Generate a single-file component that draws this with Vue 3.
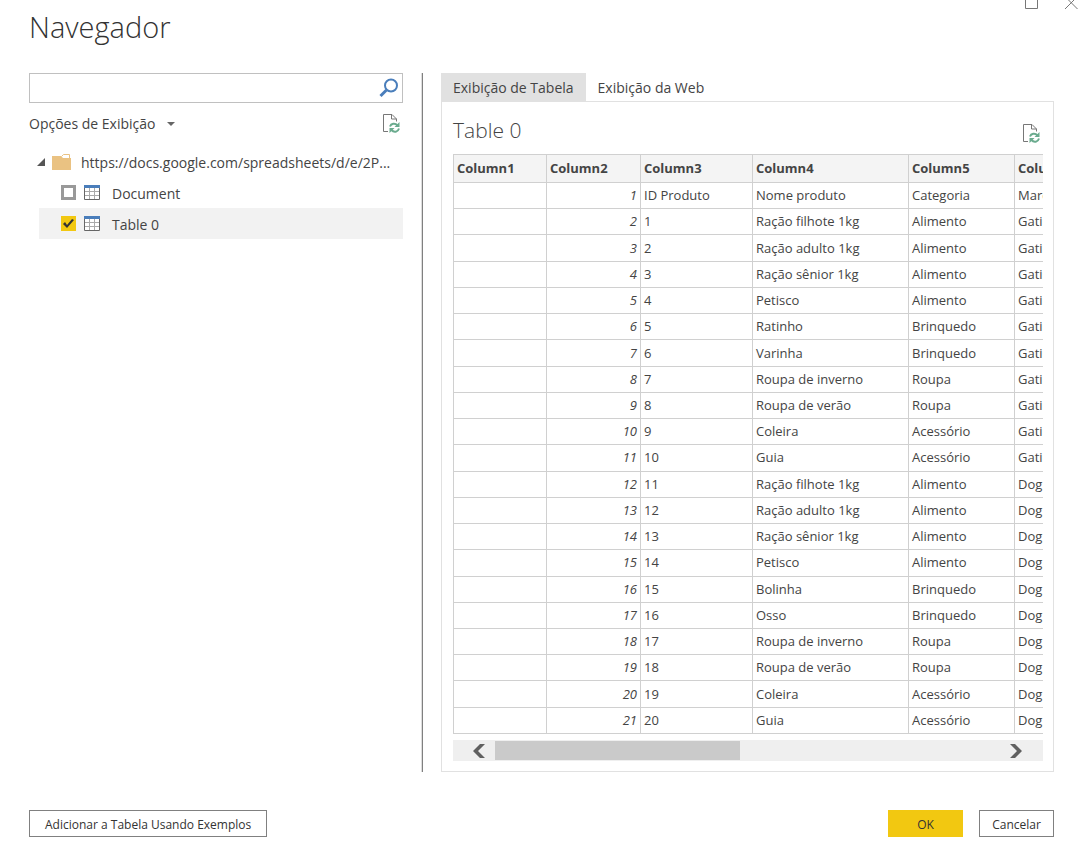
<script setup>
import { ref } from 'vue'

const search = ref('')
const items = ref([
  { name: 'Document', checked: false },
  { name: 'Table 0', checked: true },
])

const columns = ['Column1', 'Column2', 'Column3', 'Column4', 'Column5', 'Column6']
const products = [
  ['Ração filhote 1kg', 'Alimento'],
  ['Ração adulto 1kg', 'Alimento'],
  ['Ração sênior 1kg', 'Alimento'],
  ['Petisco', 'Alimento'],
  ['Ratinho', 'Brinquedo'],
  ['Varinha', 'Brinquedo'],
  ['Roupa de inverno', 'Roupa'],
  ['Roupa de verão', 'Roupa'],
  ['Coleira', 'Acessório'],
  ['Guia', 'Acessório'],
  ['Ração filhote 1kg', 'Alimento'],
  ['Ração adulto 1kg', 'Alimento'],
  ['Ração sênior 1kg', 'Alimento'],
  ['Petisco', 'Alimento'],
  ['Bolinha', 'Brinquedo'],
  ['Osso', 'Brinquedo'],
  ['Roupa de inverno', 'Roupa'],
  ['Roupa de verão', 'Roupa'],
  ['Coleira', 'Acessório'],
  ['Guia', 'Acessório'],
]
const rows = [
  ['', 1, 'ID Produto', 'Nome produto', 'Categoria', 'Marca'],
  ...products.map(([name, category], i) => [
    '', i + 2, i + 1, name, category, i < 10 ? 'Gatinho' : 'Dog',
  ]),
]
</script>

<template>
  <div class="dialog">
    <div class="window-controls">
      <button type="button" aria-label="Maximizar">
        <svg width="13" height="10" viewBox="0 0 13 10"><path d="M.5-3V8.500H12.500V-3" /></svg>
      </button>
      <button type="button" aria-label="Fechar">
        <svg width="13" height="10" viewBox="0 0 13 10"><path d="M0 9L12.500-3.500M0-3.500L12.500 9" /></svg>
      </button>
    </div>

    <h1>Navegador</h1>

    <main>
      <section class="sources">
        <div class="search">
          <input v-model="search" type="text" aria-label="Pesquisar" />
          <button type="button" aria-label="Pesquisar">
            <svg width="20" height="20" viewBox="0 0 20 20">
              <circle cx="12" cy="7.500" r="6" />
              <path d="M7.500 12L1.500 18" class="handle" />
            </svg>
          </button>
        </div>

        <div class="options">
          <button type="button" class="menu">
            Opções de Exibição
            <svg width="8" height="4" viewBox="0 0 8 4"><path d="M0 0H8L4 4Z" /></svg>
          </button>
          <button type="button" class="refresh" aria-label="Atualizar">
            <svg width="19" height="20" viewBox="0 0 19 20">
              <path class="page" d="M6 18.500H1.500V1.500H10L14.500 6V8.500M9.500 1.500V6H14.500" />
              <path class="arrows" d="M8 13.500C9 10.500 13 9.500 15.500 12.500M17 15.500C16 19 12 20 9.500 17" />
              <path class="heads" d="M17.500 9V14H12.500ZM7.500 20V15H12.500Z" />
            </svg>
          </button>
        </div>

        <div class="tree">
          <div class="root">
            <svg class="expander" width="8" height="8" viewBox="0 0 8 8"><path d="M8 0V8H0Z" /></svg>
            <svg class="folder" width="19" height="17" viewBox="0 0 19 17">
              <path d="M0 3H9L11 5H19V17H0Z" />
              <path class="tab" d="M9.500 3.500L11.500 1.500H17.500V5" />
            </svg>
            <span>https://docs.google.com/spreadsheets/d/e/2P...</span>
          </div>
          <label v-for="item in items" :key="item.name" class="item" :class="{ selected: item.checked }">
            <input v-model="item.checked" type="checkbox" />
            <svg class="grid" width="16" height="15" viewBox="0 0 16 15">
              <path class="fill" d="M0 0H16V15H0Z" />
              <path class="lines" d="M5.500 3V14M10.500 3V14M1 6.500H15M1 10.500H15" />
              <path class="frame" d="M.5 3V14.500H15.500V3" />
              <path class="top" d="M0 0H16V3H0Z" />
            </svg>
            <span>{{ item.name }}</span>
          </label>
        </div>
      </section>

      <div class="divider"></div>

      <section class="preview">
        <div class="tabs" role="tablist">
          <button type="button" role="tab" aria-selected="true" class="active">Exibição de Tabela</button>
          <button type="button" role="tab" aria-selected="false">Exibição da Web</button>
        </div>
        <div class="panel">
          <div class="panel-head">
            <h2>Table 0</h2>
            <button type="button" class="refresh" aria-label="Atualizar">
              <svg width="19" height="20" viewBox="0 0 19 20">
                <path class="page" d="M6 18.500H1.500V1.500H10L14.500 6V8.500M9.500 1.500V6H14.500" />
                <path class="arrows" d="M8 13.500C9 10.500 13 9.500 15.500 12.500M17 15.500C16 19 12 20 9.500 17" />
                <path class="heads" d="M17.500 9V14H12.500ZM7.500 20V15H12.500Z" />
              </svg>
            </button>
          </div>
          <div class="table-view">
            <table>
              <colgroup>
                <col class="c1" /><col class="c2" /><col class="c3" />
                <col class="c4" /><col class="c5" /><col class="c6" />
              </colgroup>
              <thead>
                <tr><th v-for="c in columns" :key="c" scope="col">{{ c }}</th></tr>
              </thead>
              <tbody>
                <tr v-for="row in rows" :key="row[1]">
                  <td v-for="(cell, i) in row" :key="i">{{ cell }}</td>
                </tr>
              </tbody>
            </table>
          </div>
          <div class="scrollbar">
            <button type="button" class="back" aria-label="Rolar para a esquerda">
              <svg width="12" height="14" viewBox="0 0 12 14"><path d="M7 0H12L5 7L12 14H7L0 7Z" /></svg>
            </button>
            <div class="track"><div class="thumb"></div></div>
            <button type="button" class="forward" aria-label="Rolar para a direita">
              <svg width="12" height="14" viewBox="0 0 12 14"><path d="M5 0H0L7 7L0 14H5L12 7Z" /></svg>
            </button>
          </div>
        </div>
      </section>
    </main>

    <footer>
      <button type="button" class="examples">Adicionar a Tabela Usando Exemplos</button>
      <button type="button" class="ok">OK</button>
      <button type="button" class="cancel">Cancelar</button>
    </footer>
  </div>
</template>

<style>
body {
  background: #fff;
}
</style>

<style scoped>
.dialog {
  box-sizing: border-box;
  min-height: 100vh;
  display: flex;
  flex-direction: column;
  padding: 0 24px 17px 29px;
  font-family: "Open Sans", "Noto Sans", sans-serif;
  font-size: 14px;
  line-height: 20px;
  color: #444;
}
button {
  font: inherit;
  color: inherit;
  background: none;
  border: 0;
  padding: 0;
}
svg {
  display: block;
  flex: none;
}
.window-controls {
  display: flex;
  justify-content: flex-end;
  gap: 27px;
  height: 10px;
  margin-right: -24px;
}
.window-controls path {
  fill: none;
  stroke: #777;
}
h1 {
  margin: 0 0 29px;
  font-size: 29px;
  line-height: 34px;
  font-weight: 300;
  color: #333;
}
main {
  flex: 1;
  display: grid;
  grid-template-columns: minmax(0, 374fr) 2px minmax(0, 613fr);
  gap: 18px;
}
.search {
  display: flex;
  align-items: center;
  box-sizing: border-box;
  height: 30px;
  padding-right: 3px;
  border: 1px solid #c0c0c0;
}
.search input {
  flex: 1;
  min-width: 0;
  height: 26px;
  padding: 0 6px;
  border: 0;
  outline: 0;
  font: inherit;
}
.search svg {
  fill: none;
  stroke: #4a7ebb;
  stroke-width: 2;
}
.search .handle {
  stroke-width: 3;
}
.options {
  display: flex;
  justify-content: space-between;
  align-items: center;
  height: 40px;
  padding-right: 2px;
}
.menu {
  display: flex;
  align-items: center;
  gap: 12px;
  padding-top: 2px;
}
.menu path {
  fill: #666;
}
.page {
  fill: none;
  stroke: #777;
}
.arrows {
  fill: none;
  stroke: #6aab8e;
  stroke-width: 2;
}
.heads {
  fill: #6aab8e;
}
.tree {
  margin: 3px 0 0 10px;
}
.root,
.item {
  display: flex;
  align-items: center;
  height: 31px;
}
.tree span {
  padding-top: 2px;
  white-space: nowrap;
}
.expander {
  margin-right: 7px;
  margin-left: -2px;
  fill: #555;
}
.folder {
  margin-right: 10px;
  fill: #eac282;
}
.folder .tab {
  fill: none;
  stroke: #eac282;
}
.item {
  padding-left: 22px;
}
.item.selected {
  background: #f2f2f2;
}
.item input {
  appearance: none;
  flex: none;
  box-sizing: border-box;
  width: 15px;
  height: 15px;
  margin: 0 8px 0 0;
  border: 3px solid #999;
  background: #fff;
}
.item input:checked {
  border: 0;
  background: #f2c811;
}
.item input:checked::before {
  content: "";
  display: block;
  height: 15px;
  background: #333;
  clip-path: polygon(2px 8px, 4px 6px, 6px 9px, 11px 3px, 13px 4px, 6px 12px);
}
.grid {
  margin-right: 12px;
}
.grid .fill {
  fill: #fff;
}
.grid .lines {
  stroke: #aaa;
}
.grid .frame {
  fill: none;
  stroke: #666;
}
.grid .top {
  fill: #4a7ebb;
}
.divider {
  box-sizing: border-box;
  border-left: 1px solid #ddd;
  background: #808080;
}
.preview {
  display: flex;
  flex-direction: column;
}
.tabs {
  display: flex;
}
.tabs button {
  height: 28px;
  padding: 2px 12px 0;
}
.tabs .active {
  background: #e1e1e1;
}
.panel {
  flex: 1;
  display: flex;
  flex-direction: column;
  padding: 0 10px 10px 11px;
  border: 1px solid #e1e1e1;
}
.panel-head {
  display: flex;
  justify-content: space-between;
  align-items: center;
  height: 52px;
  padding-right: 2px;
}
h2 {
  margin: 0;
  padding-top: 4px;
  font-size: 21px;
  line-height: 28px;
  font-weight: 300;
}
.panel-head .refresh {
  padding-top: 10px;
}
.table-view {
  flex: 1;
  display: flex;
  overflow: hidden;
}
table {
  flex: none;
  width: 661px;
  table-layout: fixed;
  border-collapse: collapse;
  font-size: 13px;
  line-height: 18px;
}
.c1 { width: 93px; }
.c2 { width: 94px; }
.c3 { width: 112px; }
.c4 { width: 156px; }
.c5 { width: 106px; }
.c6 { width: 100px; }
th,
td {
  height: 18px;
  padding: 3px 3px 4px;
  border: 1px solid #d0d0d0;
  text-align: left;
  white-space: nowrap;
}
th {
  height: 20px;
  background: #f4f4f4;
  font-weight: 700;
}
td:nth-child(2) {
  text-align: right;
  font-style: italic;
}
.scrollbar {
  display: flex;
  align-items: center;
  height: 21px;
  margin-top: 6px;
  background: #efefef;
}
.scrollbar path {
  fill: #606060;
}
.back {
  width: 42px;
  padding-left: 20px;
}
.forward {
  width: 42px;
  padding-left: 9px;
}
.track {
  flex: 1;
}
.thumb {
  width: 48.500%;
  height: 19px;
  background: #cacaca;
}
footer {
  display: flex;
  gap: 16px;
  margin-top: 38px;
  font-size: 12px;
}
footer button {
  box-sizing: border-box;
  height: 27px;
  min-width: 75px;
  padding: 2px 11px 0;
  border: 1px solid #808080;
  color: #333;
}
footer .examples {
  padding: 2px 15px 0;
}
footer .ok {
  margin-left: auto;
  background: #f2c811;
  border-color: #f2c811;
}
</style>
